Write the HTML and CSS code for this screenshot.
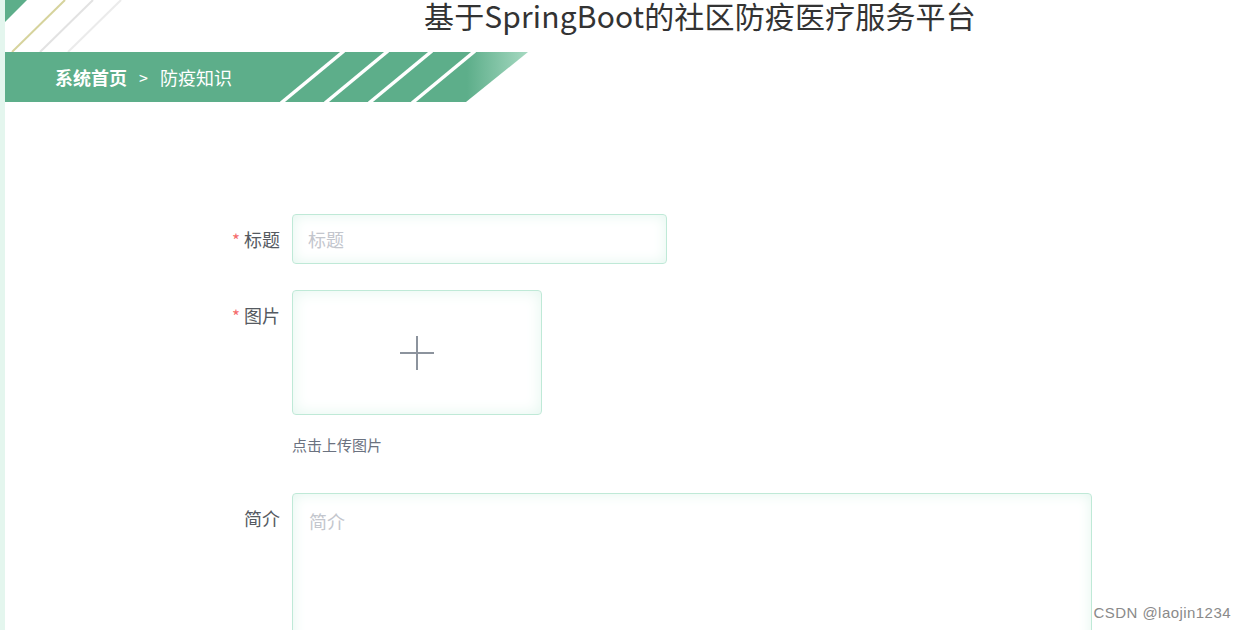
FILE: index.html
```html
<!DOCTYPE html>
<html lang="zh">
<head>
<meta charset="utf-8">
<title>防疫知识</title>
<link rel="stylesheet" href="styles.css">
</head>
<body>
<div class="page">
  <div class="side-strip"></div>
  <div class="main">
    <header class="top">
      <svg class="corner" width="130" height="52" viewBox="0 0 130 52">
        <polygon points="0,0 22,0 0,22" fill="#5dae8a"/>
        <line x1="7" y1="52" x2="60" y2="0" stroke="#d6d39c" stroke-width="2"/>
        <line x1="35" y1="52" x2="88" y2="0" stroke="#e2e2e2" stroke-width="2"/>
        <line x1="63" y1="52" x2="116" y2="0" stroke="#ebebeb" stroke-width="2"/>
      </svg>
      <h1 class="title">基于SpringBoot的社区防疫医疗服务平台</h1>
    </header>
    <nav class="crumb">
      <svg class="crumb-bg" width="524" height="50" viewBox="0 0 524 50">
        <defs>
          <linearGradient id="fade" gradientUnits="userSpaceOnUse" x1="462" y1="0" x2="523" y2="0">
            <stop offset="0" stop-color="#5dae8a"/>
            <stop offset="1" stop-color="#a6d9c1"/>
          </linearGradient>
        </defs>
        <polygon points="0,0 523,0 461,50 0,50" fill="url(#fade)"/>
        <g stroke="#ffffff" stroke-width="3.5">
          <line x1="276" y1="51" x2="339" y2="-1"/>
          <line x1="320" y1="51" x2="383" y2="-1"/>
          <line x1="364" y1="51" x2="427" y2="-1"/>
          <line x1="407" y1="51" x2="470" y2="-1"/>
        </g>
      </svg>
      <span class="crumb-home">系统首页</span>
      <span class="crumb-sep">&gt;</span>
      <span class="crumb-current">防疫知识</span>
    </nav>
    <form class="form">
      <div class="form-item">
        <label class="label"><span class="req">*</span>标题</label>
        <input class="input" type="text" placeholder="标题">
      </div>
      <div class="form-item item-upload">
        <label class="label"><span class="req">*</span>图片</label>
        <div class="upload-col">
          <div class="upload">
            <svg width="34" height="34" viewBox="0 0 34 34">
              <line x1="0" y1="17" x2="34" y2="17" stroke="#8c939d" stroke-width="2"/>
              <line x1="17" y1="0" x2="17" y2="34" stroke="#8c939d" stroke-width="2"/>
            </svg>
          </div>
          <div class="tip">点击上传图片</div>
        </div>
      </div>
      <div class="form-item">
        <label class="label">简介</label>
        <textarea class="textarea" placeholder="简介"></textarea>
      </div>
    </form>
  </div>
</div>
<div class="watermark">CSDN @laojin1234</div>
</body>
</html>
```

FILE: styles.css
```css
html, body {
  margin: 0;
  padding: 0;
  height: 100%;
  overflow: hidden;
  background: #ffffff;
  font-family: "Noto Sans CJK SC", "Noto Sans", sans-serif;
}

.page {
  display: flex;
  min-height: 100%;
}

.side-strip {
  width: 5px;
  flex: none;
  background: #e4f6ee;
}

.main {
  flex: 1;
  display: flex;
  flex-direction: column;
}

.top {
  position: relative;
  height: 52px;
}

.corner {
  position: absolute;
  left: 0;
  top: 0;
}

.title {
  margin: 0 0 0 419px;
  font-size: 30px;
  font-weight: 400;
  line-height: 30px;
  color: #333333;
  white-space: nowrap;
  letter-spacing: 0.15px;
}

.crumb {
  position: relative;
  width: 524px;
  height: 50px;
  display: flex;
  align-items: center;
  padding-left: 50px;
  box-sizing: border-box;
  color: #ffffff;
  font-size: 18px;
}

.crumb-bg {
  position: absolute;
  left: 0;
  top: 0;
}

.crumb-home,
.crumb-sep,
.crumb-current {
  position: relative;
}

.crumb-home {
  font-weight: 700;
}

.crumb-sep {
  margin: 0 12px 0 12px;
  font-size: 16px;
}

.form {
  margin-top: 112px;
  padding-left: 155px;
}

.form-item {
  display: flex;
  align-items: flex-start;
  margin-bottom: 25px;
}

.item-upload {
  margin-bottom: 38px;
}

.label {
  width: 120px;
  margin-right: 12px;
  text-align: right;
  line-height: 50px;
  font-size: 18px;
  color: #555a61;
}

.req {
  color: #f56c6c;
  margin-right: 4px;
  font-size: 17px;
}

.input,
.textarea {
  box-sizing: border-box;
  border: 1px solid #bfe9d7;
  border-radius: 4px;
  box-shadow: inset 0 0 14px #e3f6ee;
  background: #ffffff;
  font-family: inherit;
  font-size: 18px;
  color: #606266;
  outline: none;
}

.input {
  width: 375px;
  height: 50px;
  padding: 0 15px;
}

.textarea {
  width: 800px;
  height: 200px;
  padding: 12px 16px;
  resize: none;
  line-height: 30px;
}

.input::placeholder,
.textarea::placeholder {
  color: #c3c6cd;
}

.upload-col {
  display: flex;
  flex-direction: column;
}

.upload {
  box-sizing: border-box;
  width: 250px;
  height: 125px;
  border: 1px solid #bfe9d7;
  border-radius: 4px;
  box-shadow: inset 0 0 16px #e3f6ee;
  display: flex;
  align-items: center;
  justify-content: center;
}

.tip {
  margin-top: 20px;
  font-size: 15px;
  line-height: 20px;
  color: #6b7280;
}

.watermark {
  position: absolute;
  right: 16px;
  bottom: 9px;
  font-family: "Liberation Sans", Arial, sans-serif;
  font-size: 15px;
  letter-spacing: 0.45px;
  color: #8a8a8a;
}
```
